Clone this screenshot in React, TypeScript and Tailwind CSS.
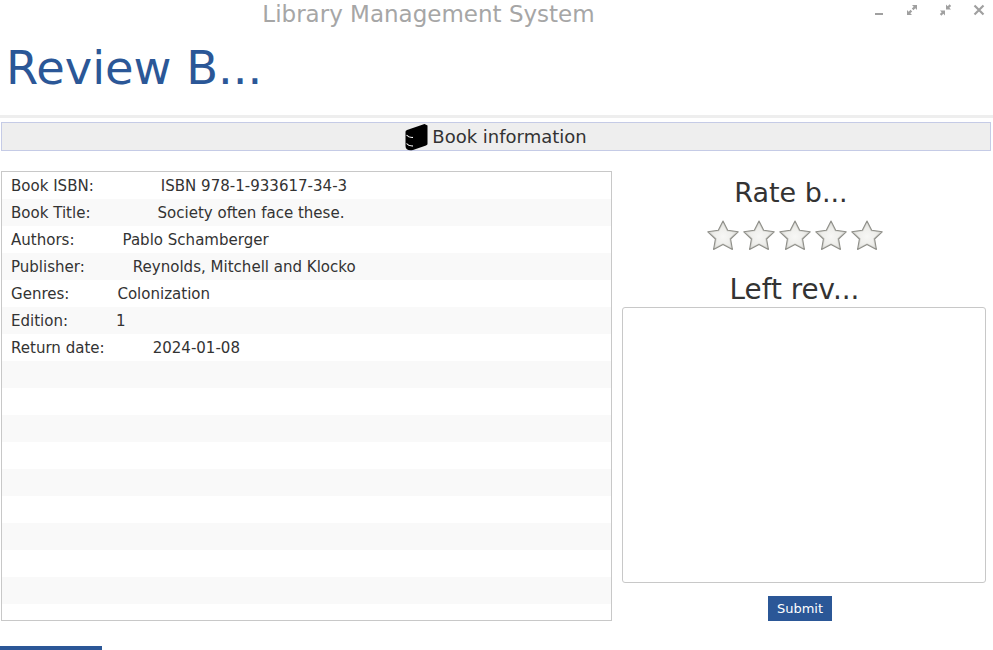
const font = 'font-["DejaVu_Sans",sans-serif]';

const rows: [string, string, string][] = [
  ['Book ISBN:', 'ISBN 978-1-933617-34-3', 'ml-[67px]'],
  ['Book Title:', 'Society often face these.', 'ml-[67px]'],
  ['Authors:', 'Pablo Schamberger', 'ml-[48px]'],
  ['Publisher:', 'Reynolds, Mitchell and Klocko', 'ml-[48px]'],
  ['Genres:', 'Colonization', 'ml-[48px]'],
  ['Edition:', '1', 'ml-[48px]'],
  ['Return date:', '2024-01-08', 'ml-[48px]'],
  ['', '', ''],
  ['', '', ''],
  ['', '', ''],
  ['', '', ''],
  ['', '', ''],
  ['', '', ''],
  ['', '', ''],
  ['', '', ''],
  ['', '', ''],
];

function Star({ id }: { id: string }) {
  return (
    <svg width="36" height="34" viewBox="0 0 36 34">
      <defs>
        <radialGradient id={id} cx="50%" cy="55%" r="55%">
          <stop offset="0%" stopColor="#f7f7f5" />
          <stop offset="65%" stopColor="#eeeeeb" />
          <stop offset="100%" stopColor="#e2e2de" />
        </radialGradient>
      </defs>
      <path
        d="M18 3 L22.7 12.2 L33.2 13.8 L25.6 21 L27.4 31.4 L18 26.6 L8.6 31.4 L10.4 21 L2.8 13.8 L13.3 12.2 Z"
        fill="#d4d4d0"
        stroke="#8f8f89"
        strokeWidth="1.1"
        strokeLinejoin="round"
      />
      <path
        d="M18 5.5 L21.8 13.2 L30.6 14.6 L24.2 20.6 L25.7 29.3 L18 25.2 L10.3 29.3 L11.8 20.6 L5.4 14.6 L14.2 13.2 Z"
        fill={`url(#${id})`}
        strokeLinejoin="round"
      />
    </svg>
  );
}

function BookIcon() {
  return (
    <svg width="23" height="28" viewBox="0 0 23 28" fill="#000">
      <path d="M19.5 1 L22.5 2.5 L22.5 20.5 C22.5 21.5 22 22 21 22.5 L8 27 C4 28 0.5 27 0.5 23 L0.5 9 C0.5 8 1 7.5 2 7 Z" />
      <path d="M1.5 12 C3 13.8 5 14.6 8 14.4" stroke="#fff" strokeWidth="1.1" fill="none" />
      <path d="M1.5 20.5 C3 22.3 5 23.1 8 22.9" stroke="#fff" strokeWidth="1.1" fill="none" />
    </svg>
  );
}

function WindowButtons() {
  return (
    <div className="flex items-start gap-[21px] pt-[4px] pr-[8px]">
      <svg width="12" height="12" viewBox="0 0 12 12" fill="#a0a0a0">
        <rect x="2" y="9" width="8" height="2" />
      </svg>
      <svg width="12" height="12" viewBox="0 0 12 12" fill="#a0a0a0">
        <path d="M6 1 H11 V6 L9.3 4.3 L7.4 6.2 L5.8 4.6 L7.7 2.7 Z" />
        <path d="M1 6 L2.7 7.7 L4.6 5.8 L6.2 7.4 L4.3 9.3 L6 11 H1 Z" />
      </svg>
      <svg width="13" height="12" viewBox="0 0 13 12" fill="#a0a0a0">
        <path d="M7 5.5 V0.5 L8.7 2.2 L10.6 0.3 L12.2 1.9 L10.3 3.8 L12 5.5 Z" />
        <path d="M6 6.5 V11.5 L4.3 9.8 L2.4 11.7 L0.8 10.1 L2.7 8.2 L1 6.5 Z" />
      </svg>
      <svg width="12" height="12" viewBox="0 0 12 12" stroke="#a0a0a0" strokeWidth="2.2">
        <path d="M1.5 1.5 L10.5 10.5 M10.5 1.5 L1.5 10.5" />
      </svg>
    </div>
  );
}

export default function App() {
  return (
    <div className={`flex h-[650px] w-[993px] flex-col overflow-hidden bg-white text-[#333] ${font}`}>
      <div className="flex h-[28px] items-start">
        <div className="w-[857px] text-center text-[23px] leading-[29px] text-[#a6a6a6]">
          Library Management System
        </div>
        <div className="flex-1" />
        <WindowButtons />
      </div>

      <h1 className="h-[87px] pl-[6px] pt-[8px] text-[46.4px] leading-[64px] text-[#2b5797]">Review B...</h1>

      <div className="h-[3px] bg-[#eeeeee]" />

      <div className="ml-[1px] mr-[2px] mt-[4px] flex h-[29px] items-center justify-center gap-[4px] border border-[#c5cbe6] bg-[#eeeeee] text-[18px]">
        <BookIcon />
        <span className="-translate-y-[0.5px]">Book information</span>
      </div>

      <div className="flex flex-1 pt-[20px]">
        <div className="ml-[1px] h-[450px] w-[611px] border border-[#c8c8c8] text-[15.04px]">
          {rows.map(([label, value, gap], i) => (
            <div
              key={i}
              className={`flex h-[27px] items-center pl-[9px] pt-[2px] ${i % 2 === 1 ? 'bg-[#f9f9f9]' : 'bg-white'}`}
            >
              <span>{label}</span>
              <span className={gap}>{value}</span>
            </div>
          ))}
        </div>

        <div className="ml-[10px] flex w-[364px] flex-col pt-[1px]">
          <div className="pr-[26px] text-center text-[27px] leading-[42px]">Rate b...</div>
          <div className="mt-[4px] flex justify-center pr-[18px]">
            {[0, 1, 2, 3, 4].map((n) => (
              <Star key={n} id={`star-${n}`} />
            ))}
          </div>
          <div className="mt-[19px] h-[36px] pr-[19px] text-center text-[27.8px] leading-[38px]">Left rev...</div>
          <textarea className="h-[276px] w-[364px] resize-none rounded-[3px] border border-[#c8c8c8] bg-white" />
          <div className="mt-[13px] flex justify-center pr-[8px]">
            <button className="h-[25px] w-[64px] bg-[#2b5797] text-[13px] text-white">Submit</button>
          </div>
        </div>
      </div>

      <div className="h-[4px] w-[102px] bg-[#2b5797]" />
    </div>
  );
}
